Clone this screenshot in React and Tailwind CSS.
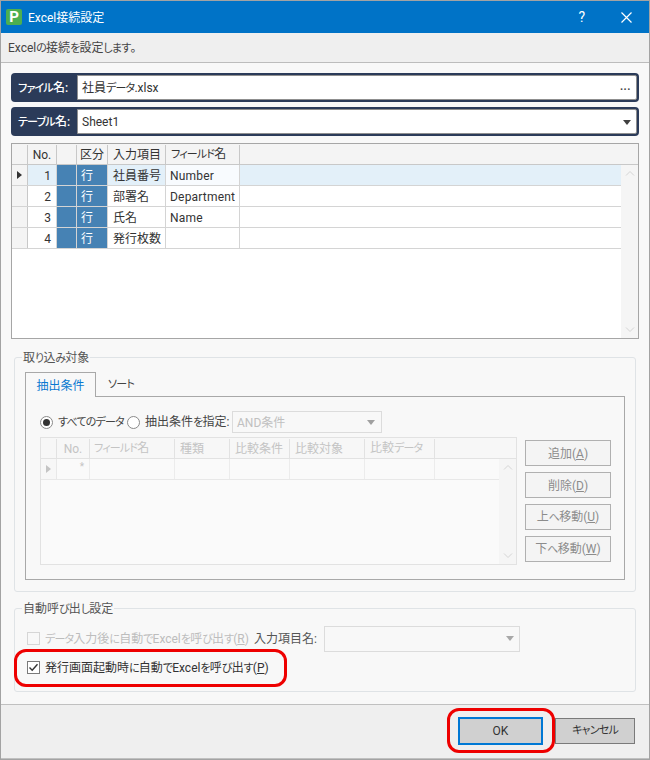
import React from "react";

const FONT = 'Roboto,"Noto Sans CJK JP",sans-serif';

function J({ children }) {
  const parts = String(children).split(/([\u3040-\u30ff]+)/);
  return (
    <>
      {parts.map((p, i) =>
        i % 2 === 1 ? (
          <span key={i} className="text-[11px] tracking-[-0.8px]">{p}</span>
        ) : (
          <React.Fragment key={i}>{p}</React.Fragment>
        )
      )}
    </>
  );
}

function Caret({ className = "border-t-[#404040]" }) {
  return <span className={"block h-0 w-0 border-x-[4px] border-t-[5px] border-x-transparent " + className} />;
}

function Field({ label, value, right }) {
  return (
    <div className="flex h-[29px] rounded-[4px] bg-[#2b3b59] p-[2px] pl-0">
      <div className="flex w-[66px] shrink-0 items-center pl-[7px] pt-[1px] text-[12px] font-medium text-white"><span><J>{label}</J></span></div>
      <div className="flex flex-1 items-center justify-between rounded-r-[2px] border border-[#8f8f8f] bg-white pl-[4px] pr-[5px] pt-[1px] text-[12px] text-[#333]">
        <span><J>{value}</J></span>
        {right}
      </div>
    </div>
  );
}

const mainCols = [
  ["No.", 29],
  ["", 20],
  ["区分", 31],
  ["入力項目", 58],
  ["フィールド名", 74],
];

const mainRows = [
  ["1", "社員番号", "Number"],
  ["2", "部署名", "Department"],
  ["3", "氏名", "Name"],
  ["4", "発行枚数", ""],
];

function MainGrid() {
  return (
    <div className="mt-[7px] flex h-[196px] flex-col border border-[#a6a6a6] bg-white text-[12px] text-[#333]">
      <div className="flex h-[21px] shrink-0 border-b border-[#c8c8c8] bg-[#f4f4f4] pt-[1px]">
        <div className="w-[16px] shrink-0 border-r border-[#c8c8c8]" />
        {mainCols.map(([t, w], i) => (
          <div key={i} style={{ width: w }} className={"flex shrink-0 items-center border-r border-[#c8c8c8] " + (i === 0 || i === 2 ? "justify-center" : "pl-[5px]")}>
            <span><J>{t}</J></span>
          </div>
        ))}
        <div className="flex-1" />
      </div>
      <div className="flex flex-1">
        <div className="flex-1">
          {mainRows.map(([n, a, b], i) => (
            <div key={n} className={"flex h-[21px] border-b border-[#d4d4d4] " + (i === 0 ? "bg-[#e3f0f9]" : "bg-white")}>
              <div className="flex w-[16px] shrink-0 items-center justify-center border-r border-[#c8c8c8] bg-[#f4f4f4]">
                {i === 0 && <span className="block h-0 w-0 border-y-[4px] border-l-[5px] border-y-transparent border-l-[#333]" />}
              </div>
              <div className="flex w-[29px] shrink-0 items-center justify-end border-r border-[#d4d4d4] pr-[5px] pt-[1px]">{n}</div>
              <div className="w-[20px] shrink-0 border-r border-[#d4d4d4] bg-[#4682b4]" />
              <div className="flex w-[31px] shrink-0 items-center border-r border-[#d4d4d4] bg-[#4682b4] pl-[4px] pt-[1px] text-white">行</div>
              <div className="flex w-[58px] shrink-0 items-center border-r border-[#d4d4d4] pl-[5px] pt-[1px]">{a}</div>
              <div className={"flex w-[74px] shrink-0 items-center border-r border-[#d4d4d4] pl-[4px] pt-[1px] tracking-[0.2px] " + (i === 0 ? "bg-[#f8fbfe]" : "")}>{b}</div>
            </div>
          ))}
        </div>
        <Scrollbar />
      </div>
    </div>
  );
}

function Scrollbar() {
  return (
    <div className="flex w-[17px] shrink-0 flex-col items-center justify-between bg-[#f5f5f5] py-[5px]">
      <svg width="10" height="6" viewBox="0 0 10 6" fill="none" stroke="#d4d4d4"><path d="M1 5.5 5 1.5 9 5.5" /></svg>
      <svg width="10" height="6" viewBox="0 0 10 6" fill="none" stroke="#d4d4d4"><path d="M1 .5 5 4.5 9 .5" /></svg>
    </div>
  );
}

const subCols = [
  ["No.", 33, "justify-center"],
  ["フィールド名", 85, "pl-[4px]"],
  ["種類", 55, "pl-[5px]"],
  ["比較条件", 60, "pl-[5px]"],
  ["比較対象", 75, "pl-[5px]"],
  ["比較データ", 70, "pl-[5px]"],
];

function SubGrid() {
  return (
    <div className="flex h-[128px] w-[477px] shrink-0 flex-col border border-[#e2e2e2] bg-[#fafafa] text-[12px] text-[#c4c4c4]">
      <div className="flex h-[21px] shrink-0 border-b border-[#e2e2e2] bg-[#f7f7f7] pt-[1px]">
        <div className="w-[16px] shrink-0 border-r border-[#e2e2e2]" />
        {subCols.map(([t, w, c], i) => (
          <div key={i} style={{ width: w }} className={"flex shrink-0 items-center border-r border-[#e2e2e2] " + c}><span><J>{t}</J></span></div>
        ))}
      </div>
      <div className="flex flex-1">
        <div className="flex-1">
          <div className="flex h-[21px] border-b border-[#e8e8e8]">
            <div className="flex w-[16px] shrink-0 items-center justify-center border-r border-[#e8e8e8] bg-[#f7f7f7]">
              <span className="block h-0 w-0 border-y-[4px] border-l-[5px] border-y-transparent border-l-[#c4c4c4]" />
            </div>
            {subCols.map(([t, w], i) => (
              <div key={i} style={{ width: w }} className="flex shrink-0 justify-end border-r border-[#ececec] pr-[5px] text-[10px] leading-[16px]">{i === 0 ? "*" : ""}</div>
            ))}
          </div>
        </div>
        <Scrollbar />
      </div>
    </div>
  );
}

function SideButton({ text, k }) {
  return (
    <div className="flex h-[26px] w-[86px] items-center justify-center border border-[#b0b0b0] bg-[#f4f4f4] pt-[1px] text-[12px] text-[#8c8c8c]">
      <span><J>{text}</J>(<span className="underline">{k}</span>)</span>
    </div>
  );
}

function Legend({ children }) {
  return <span className="absolute left-[7px] top-[-8px] bg-[#f8f8f8] px-[1px] text-[12px] leading-[16px] text-[#555]"><J>{children}</J></span>;
}

export default function App() {
  return (
    <div className="flex h-[760px] w-[650px] flex-col border-x border-t border-[#a3a3a3] bg-[#f8f8f8] [font-feature-settings:'palt']" style={{ fontFamily: FONT }}>
      <div className="flex h-[32px] shrink-0 items-center bg-[#0073c7] pl-[5px] text-white">
        <div className="flex h-[16px] w-[16px] items-center justify-center rounded-[2px] bg-[#4caf50] text-[15px] font-bold leading-none text-white">P</div>
        <span className="ml-[6px] pt-[1px] text-[12px]">Excel接続設定</span>
        <span className="ml-auto mr-[36px] text-[14px]">?</span>
        <svg className="mr-[17px]" width="11" height="11" viewBox="0 0 11 11" fill="none" stroke="#fff" strokeWidth="1.2"><path d="M.5.5 10.5 10.5M10.5.5.5 10.5" /></svg>
      </div>
      <div className="flex h-[30px] shrink-0 items-center border-b border-[#bcbcbc] bg-[#efefef] pl-[7px] pt-[1px] text-[12px] text-[#444]"><span><J>Excelの接続を設定します。</J></span></div>

      <div className="flex flex-1 flex-col px-[10px] pt-[10px]">
        <Field label="ファイル名:" value="社員データ.xlsx" right={<span className="mb-[2px] text-[11px] font-bold tracking-[0.5px] text-[#444]">...</span>} />
        <div className="h-[5px]" />
        <Field label="テーブル名:" value="Sheet1" right={<Caret />} />
        <MainGrid />

        <div className="relative mx-[3px] mt-[18px] h-[235px] rounded-[3px] border border-[#dfe3e6] px-[10px] pt-[14px]">
          <Legend>取り込み対象</Legend>
          <div className="flex h-[25px] items-end">
            <div className="flex h-[25px] w-[71px] items-center justify-center border-x border-t border-[#a8a8a8] bg-[#f8f8f8] pt-[1px] text-[12px] text-[#0a78d0]">抽出条件</div>
            <div className="flex h-[24px] w-[50px] items-center justify-center border-b border-[#a8a8a8] text-[12px] text-[#444]"><span><J>ソート</J></span></div>
            <div className="h-[24px] flex-1 border-b border-[#a8a8a8]" />
          </div>
          <div className="-mt-px h-[184px] border-x border-b border-[#a8a8a8] px-[14px] pt-[15px]">
            <div className="flex h-[22px] items-center text-[12px] text-[#444]">
              <span className="flex h-[13px] w-[13px] shrink-0 items-center justify-center rounded-full border border-[#8a8a8a] bg-white">
                <span className="block h-[7px] w-[7px] rounded-full bg-[#333]" />
              </span>
              <span className="ml-[5px] w-[65px] shrink-0 whitespace-nowrap pt-[1px]"><J>すべてのデータ</J></span>
              <span className="ml-[4px] h-[13px] w-[13px] shrink-0 rounded-full border border-[#8a8a8a] bg-white" />
              <span className="ml-[5px] w-[84px] shrink-0 whitespace-nowrap pt-[1px]"><J>抽出条件を指定:</J></span>
              <div className="ml-[3px] flex h-[22px] w-[150px] items-center justify-between border border-[#dcdcdc] bg-[#f8f8f8] pl-[4px] pr-[6px] pt-[1px] text-[#c0c0c0]">
                <span>AND条件</span>
                <Caret className="border-t-[#a0a0a0]" />
              </div>
            </div>
            <div className="mt-[4px] flex">
              <SubGrid />
              <div className="ml-[8px] mt-[3px] flex flex-col gap-[6px]">
                <SideButton text="追加" k="A" />
                <SideButton text="削除" k="D" />
                <SideButton text="上へ移動" k="U" />
                <SideButton text="下へ移動" k="W" />
              </div>
            </div>
          </div>
        </div>

        <div className="relative mx-[3px] mt-[16px] h-[84px] rounded-[3px] border border-[#dfe3e6] pl-[12px] pt-[17px]">
          <Legend>自動呼び出し設定</Legend>
          <div className="flex h-[25px] items-center text-[12px]">
            <span className="h-[13px] w-[13px] shrink-0 border border-[#d6d6d6] bg-[#f8f8f8]" />
            <span className="ml-[5px] w-[203px] shrink-0 whitespace-nowrap pt-[1px] text-[#bdbdbd]"><J>データ入力後に自動でExcelを呼び出す</J>(<span className="underline">R</span>)</span>
            <span className="ml-[6px] w-[66px] shrink-0 whitespace-nowrap pt-[1px] text-[#555]">入力項目名:</span>
            <div className="ml-[4px] flex h-[26px] w-[196px] items-center justify-end border border-[#dcdcdc] bg-[#f8f8f8] pr-[5px]">
              <Caret className="border-t-[#a8a8a8]" />
            </div>
          </div>
          <div className="mt-[4px] flex h-[25px] items-center text-[12px] text-[#333]">
            <span className="flex h-[13px] w-[13px] shrink-0 items-center justify-center border border-[#7a7a7a] bg-white">
              <svg width="11" height="11" viewBox="0 0 11 11" fill="none" stroke="#333" strokeWidth="1.4"><path d="M1.5 5.5 4.2 8.2 9.5 2.2" /></svg>
            </span>
            <span className="ml-[5px] whitespace-nowrap pt-[1px]"><J>発行画面起動時に自動でExcelを呼び出す</J>(<span className="underline">P</span>)</span>
          </div>
        </div>
        <div className="pointer-events-none absolute left-[14px] top-[649px] h-[38px] w-[273px] rounded-[12px] border-[3px] border-[#ee0000]" />
      </div>

      <div className="relative flex h-[55px] shrink-0 items-center justify-end border-y border-[#c0c0c0] bg-[#efefef] pb-[2px] pr-[14px] text-[12px] text-[#333]">
        <div className="flex h-[28px] w-[85px] items-center justify-center border-2 border-[#0078d4] bg-[#d0d0d0]">OK</div>
        <div className="ml-[12px] flex h-[26px] w-[80px] items-center justify-center border border-[#7a7a7a] bg-[#d0d0d0]"><span><J>キャンセル</J></span></div>
        <div className="pointer-events-none absolute left-[446px] top-[3px] h-[45px] w-[108px] rounded-[12px] border-[3px] border-[#ee0000]" />
      </div>
      <div className="h-[1px] shrink-0 bg-[#a3a3a3]" />
    </div>
  );
}
